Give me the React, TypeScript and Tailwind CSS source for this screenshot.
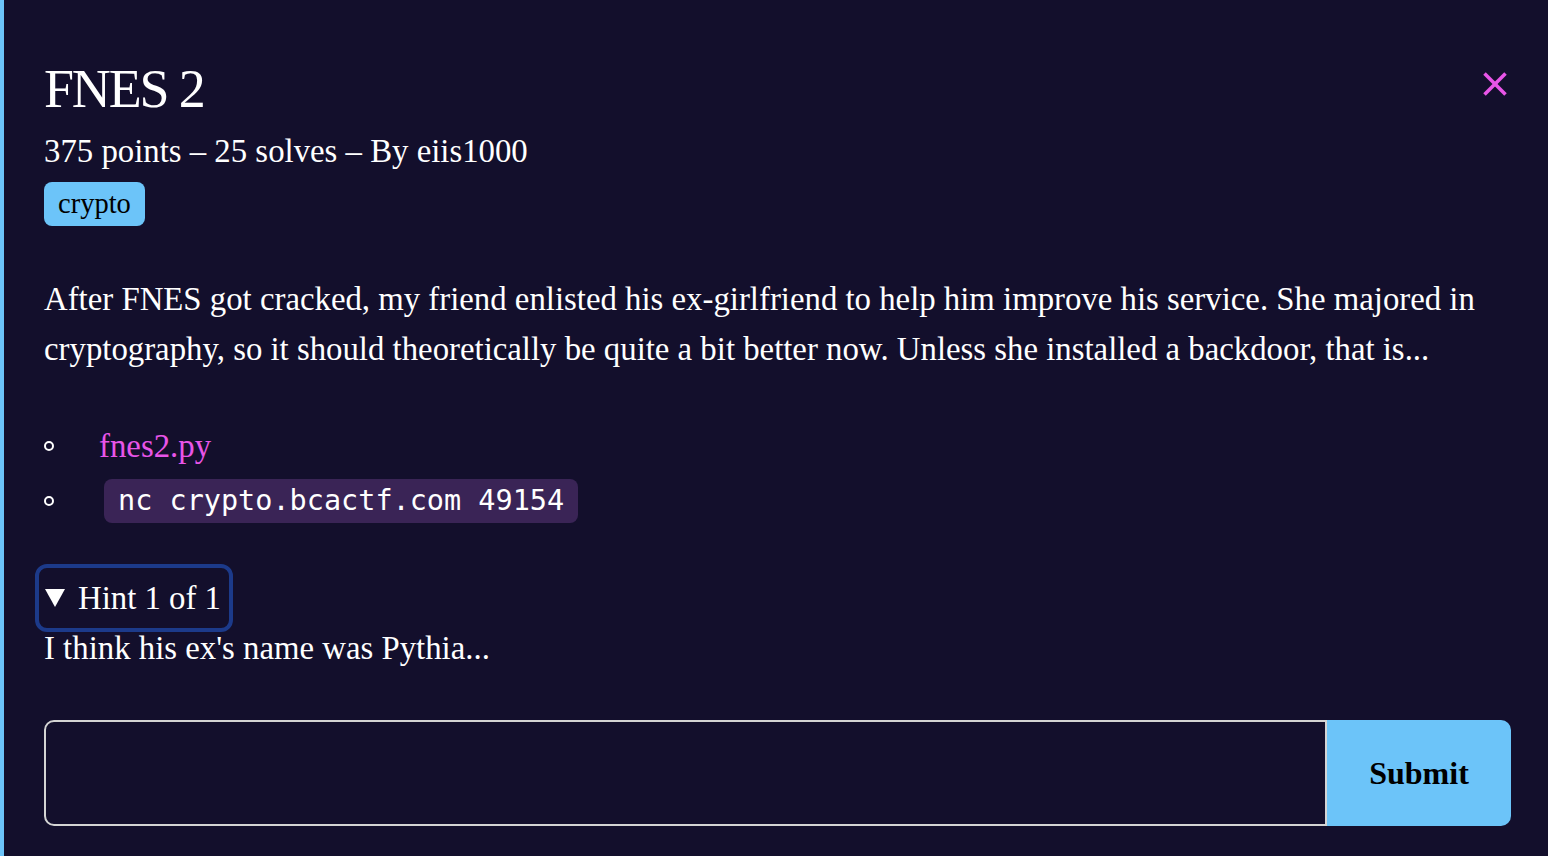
import React from 'react';

export default function App() {
  return (
    <div className="min-h-screen bg-[#130f2c] border-l-4 border-[#6cc4f9] text-white font-['Liberation_Serif','Times_New_Roman',serif]">
      <div className="pl-10 pr-[37px] pt-[57px] pb-8">
        <div className="flex items-start justify-between">
          <h1 className="text-[54px] leading-[64px] tracking-[-0.04em] font-normal">FNES 2</h1>
          <button className="mt-[15px] mr-[4px] text-[#e855e8]" aria-label="Close">
            <svg width="24" height="24" viewBox="0 0 24 24" fill="none" stroke="currentColor" strokeWidth="3.5">
              <path d="M1.5 1.5 22.5 22.5" />
              <path d="M22.5 1.5 1.5 22.5" />
            </svg>
          </button>
        </div>
        <p className="mt-[10px] text-[32.8px] leading-[40px]">375 points – 25 solves – By eiis1000</p>
        <div className="mt-[11px]">
          <span className="inline-block h-[44px] px-[14px] rounded-lg bg-[#6cc4f9] text-black text-[28.5px] leading-[44px]">crypto</span>
        </div>
        <p className="mt-[48px] text-[32.8px] leading-[50px]">
          After FNES got cracked, my friend enlisted his ex-girlfriend to help him improve his service. She majored in cryptography, so it should theoretically be quite a bit better now. Unless she installed a backdoor, that is...
        </p>
        <ul className="mt-[47px] flex flex-col gap-[5px] text-[32.8px]">
          <li className="flex items-center h-[50px]">
            <span className="w-[10px] h-[10px] rounded-full border-2 border-white" />
            <a href="#" className="ml-[45px] leading-[50px] text-[#e855e8]">fnes2.py</a>
          </li>
          <li className="flex items-center h-[50px]">
            <span className="w-[10px] h-[10px] rounded-full border-2 border-white" />
            <code className="ml-[50px] h-[44px] px-[14px] rounded-lg bg-[#3a2456] text-[28.5px] leading-[44px] font-['DejaVu_Sans_Mono',monospace]">nc crypto.bcactf.com 49154</code>
          </li>
        </ul>
        <details open className="mt-[46px] text-[32.8px]">
          <summary className="inline-flex items-center h-[50px] pl-[1px] pr-[3px] leading-[50px] rounded-[3px] outline-4 outline-[#1c3a8a] outline-offset-[5px] cursor-pointer">
            <svg width="20" height="18" viewBox="0 0 20 18" className="mr-[13px]">
              <polygon points="0,0 20,0 10,18" fill="white" />
            </svg>
            Hint 1 of 1
          </summary>
          <p className="leading-[50px]">I think his ex's name was Pythia...</p>
        </details>
        <form className="mt-[47px] flex h-[106px]" onSubmit={(e) => e.preventDefault()}>
          <input className="flex-1 min-w-0 bg-transparent border-2 border-[#d4d4d4] rounded-l-[10px] px-4 text-[32px] text-white outline-none" />
          <button type="submit" className="w-[184px] bg-[#6cc4f9] rounded-r-[10px] text-black text-[32px] font-bold">Submit</button>
        </form>
      </div>
    </div>
  );
}
